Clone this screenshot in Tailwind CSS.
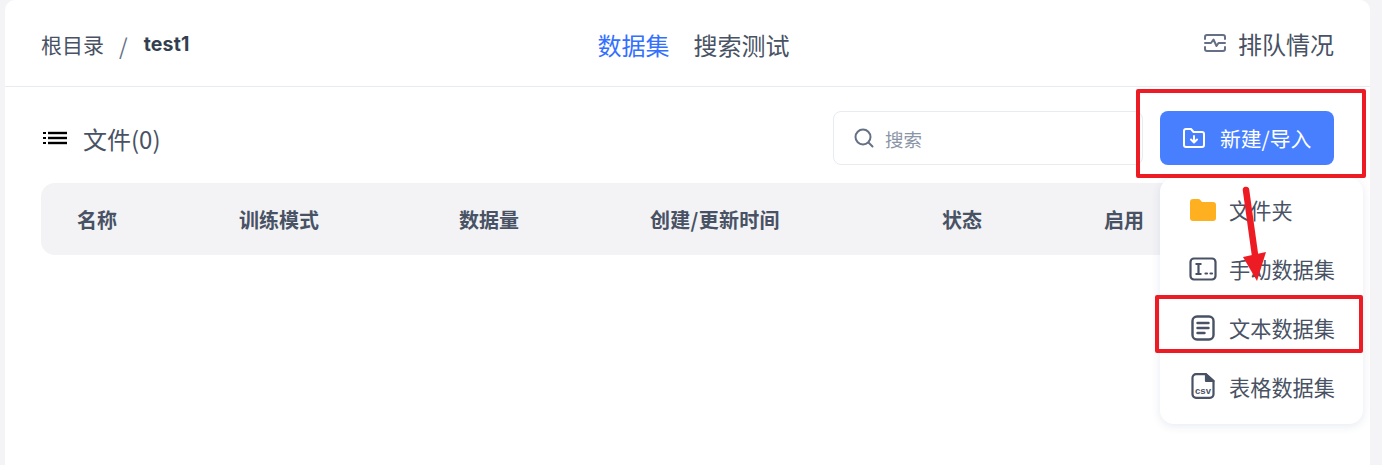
<!DOCTYPE html>
<html lang="zh-CN">
<head>
  <meta charset="UTF-8" />
  <title>数据集</title>
  <script src="https://cdn.jsdelivr.net/npm/@tailwindcss/browser@4"></script>
</head>
<body class="bg-[#f4f4f7] h-[465px] overflow-hidden font-['Noto_Sans_CJK_SC','Noto_Sans',sans-serif] relative">

  <!-- main card -->
  <div class="ml-[5px] w-[1365px] h-[465px] bg-white rounded-t-[10px]">
    <!-- header -->
    <div class="h-[87px] border-b border-[#e8ebf0] flex items-center justify-between pl-[36px] pr-[36px]">
      <div class="flex items-center w-[300px] text-[#485264] pt-[3px]">
        <span class="text-[21px]">根目录</span>
        <span class="text-[22px] text-[#667085] ml-[15px] mr-[16px] leading-[28px]">/</span>
        <span class="text-[19.5px] font-bold text-[#333f50] font-['Inter'] tracking-[0.2px]">test1</span>
      </div>
      <div class="flex items-center gap-[24px] text-[24px] text-[#485264] pt-[3px] ml-[12px]">
        <span class="text-[#3370ff]">数据集</span>
        <span>搜索测试</span>
      </div>
      <div class="flex items-center justify-end w-[300px] text-[24px] text-[#485264] pt-[2px]">
        <svg class="w-[24px] h-[20px] mr-[11px] mt-[-2px]" viewBox="0 0 24 20" fill="none" stroke="#667085" stroke-width="2" stroke-linecap="round" stroke-linejoin="round">
          <path d="M2 6V4a2 2 0 0 1 2-2h16a2 2 0 0 1 2 2v2" />
          <path d="M2 14v2a2 2 0 0 0 2 2h16a2 2 0 0 0 2-2v-2" />
          <path d="M2 10h6l2.500-3.500 3 6.500 2-3h6.500" />
        </svg>
        <span>排队情况</span>
      </div>
    </div>

    <!-- toolbar -->
    <div class="flex items-center justify-between pl-[36px] pr-[36px] pt-[24px]">
      <div class="flex items-center text-[#485264]">
        <svg class="w-[26px] h-[18px] mr-[16px] mt-[1px]" viewBox="0 0 26 18" fill="#000">
          <rect x="2" y="2" width="3" height="2" />
          <rect x="2" y="7" width="3" height="2" />
          <rect x="2" y="12" width="3" height="2" />
          <rect x="7" y="1.800" width="19" height="2.400" />
          <rect x="7" y="6.800" width="19" height="2.400" />
          <rect x="7" y="11.800" width="19" height="2.400" />
        </svg>
        <span class="text-[24px] pt-[2px]">文件(0)</span>
      </div>
      <div class="flex items-center">
        <div class="w-[310px] h-[54px] border border-[#e8ebf0] rounded-[8px] flex items-center pl-[19px] mr-[17px]">
          <svg class="w-[22px] h-[22px] mr-[10px]" viewBox="0 0 22 22" fill="none" stroke="#667085" stroke-width="2" stroke-linecap="round">
            <circle cx="10" cy="10" r="7.500" />
            <path d="M16 16l3.500 3.500" />
          </svg>
          <span class="text-[18.500px] text-[#8a95a7] pt-[3px]">搜索</span>
        </div>
        <button class="w-[174px] h-[54px] bg-[#487fff] rounded-[8px] flex items-center text-white text-[20.800px] pl-[22px]">
          <svg class="w-[24px] h-[22px] mr-[14px]" viewBox="0 0 24 22" fill="none" stroke="#fff" stroke-width="2" stroke-linejoin="round" stroke-linecap="round">
            <path d="M2 4a2 2 0 0 1 2-2h5l2.500 3H20a2 2 0 0 1 2 2v11a2 2 0 0 1-2 2H4a2 2 0 0 1-2-2z" />
            <path d="M12 9v6M9 12.500l3 3 3-3" />
          </svg>
          <span class="pt-[1px]">新建/导入</span>
        </button>
      </div>
    </div>

    <!-- table head -->
    <div class="mt-[18px] ml-[36px] w-[1293px] h-[72px] bg-[#f3f3f6] rounded-[14px] flex items-center pt-[1px] text-[20px] font-semibold text-[#485264]">
      <span class="ml-[36px] w-[162px]">名称</span>
      <span class="w-[220px]">训练模式</span>
      <span class="w-[191px]">数据量</span>
      <span class="w-[292px] tracking-[0.3px]">创建/更新时间</span>
      <span class="w-[162px]">状态</span>
      <span>启用</span>
    </div>
  </div>

  <!-- dropdown menu -->
  <div class="absolute left-[1160px] top-[178px] w-[203px] h-[246px] bg-white rounded-[14px] shadow-[0_2px_10px_rgba(19,51,107,0.1)] flex flex-col pt-[3px] text-[21.200px] text-[#485264]">
    <div class="h-[58.700px] flex items-center pl-[29px]">
      <svg class="w-[28px] h-[24px] mr-[12px]" viewBox="0 0 28 24" fill="#ffb020">
        <path d="M1 4a3 3 0 0 1 3-3h5.500a2 2 0 0 1 1.600.800L13 4h11a3 3 0 0 1 3 3v13a3 3 0 0 1-3 3H4a3 3 0 0 1-3-3z" />
      </svg>
      <span>文件夹</span>
    </div>
    <div class="h-[58.700px] flex items-center pl-[29px]">
      <svg class="w-[28px] h-[24px] mr-[12px]" viewBox="0 0 28 24" fill="none" stroke="#485264" stroke-width="2.200">
        <rect x="1.500" y="1.500" width="25" height="21" rx="3.500" />
        <path d="M6.500 7h6M9.500 7v10M6.500 17h6" />
        <path d="M16.500 16.500h1.500M21.500 16.500h1.500" stroke-linecap="round" />
      </svg>
      <span>手动数据集</span>
    </div>
    <div class="h-[58.700px] flex items-center pl-[29px]">
      <svg class="w-[28px] h-[26px] mr-[12px]" viewBox="0 0 28 26" fill="none" stroke="#485264" stroke-width="2.400" stroke-linecap="round">
        <rect x="3.500" y="1.500" width="21" height="23" rx="4.500" />
        <path d="M8.500 8h11M8.500 13h11M8.500 18h7" />
      </svg>
      <span>文本数据集</span>
    </div>
    <div class="h-[58.700px] flex items-center pl-[29px]">
      <svg class="w-[28px] h-[26px] mr-[12px]" viewBox="0 0 28 26" fill="none" stroke="#485264" stroke-width="2.200" stroke-linejoin="round">
        <path d="M17 1.200H7a3.500 3.500 0 0 0-3.500 3.500v16.600A3.500 3.500 0 0 0 7 24.800h14a3.500 3.500 0 0 0 3.500-3.500V8z" />
        <path d="M17 1.200V8h7.500z" fill="#485264" />
        <text x="14" y="20.500" text-anchor="middle" font-size="9.500" font-weight="700" fill="#485264" stroke="none" font-family="Liberation Sans">csv</text>
      </svg>
      <span>表格数据集</span>
    </div>
  </div>

  <!-- red annotations -->
  <div class="absolute left-[1136px] top-[89px] w-[230px] h-[89px] border-[4px] border-[#ed1c24] rounded-[2px]"></div>
  <div class="absolute left-[1155px] top-[295px] w-[208px] h-[58px] border-[4px] border-[#ed1c24] rounded-[2px]"></div>
  <svg class="absolute left-[1235px] top-[185px] w-[40px] h-[100px]" viewBox="0 0 40 100">
    <path d="M11 5L20 70" stroke="#ed1c24" stroke-width="6.500" stroke-linecap="round" fill="none" />
    <path d="M8 72L31 67L22 96Z" fill="#ed1c24" />
  </svg>

</body>
</html>
